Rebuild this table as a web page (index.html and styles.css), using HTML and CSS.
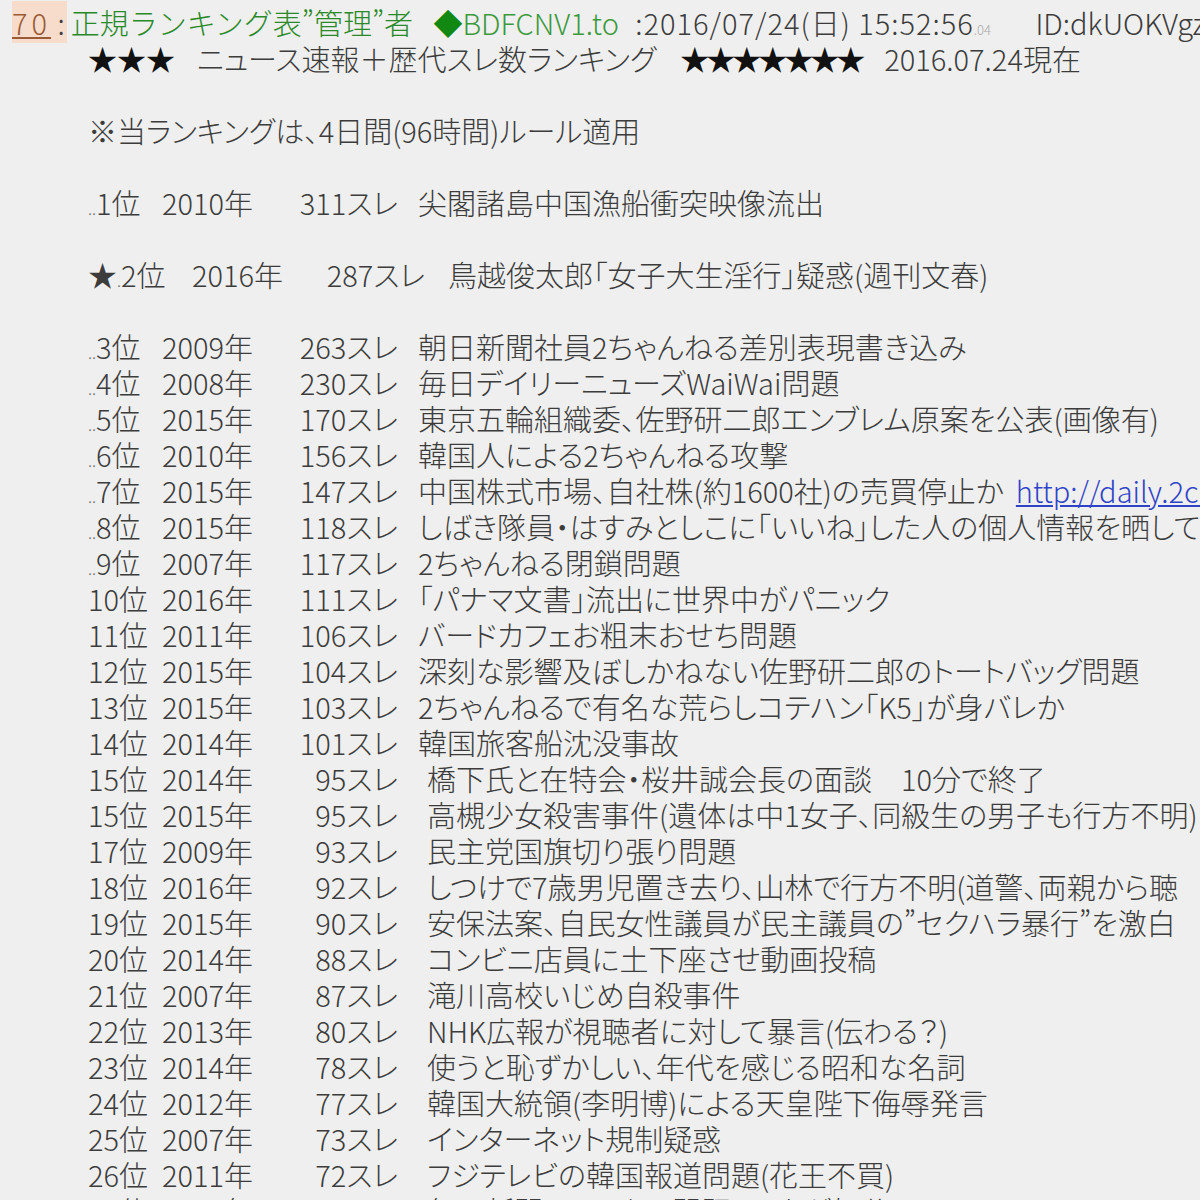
FILE: index.html
```html
<!DOCTYPE html>
<html lang="ja">
<head>
    <meta charset="UTF-8">
    <title>ニュース速報＋歴代スレ数ランキング</title>
    <link rel="stylesheet" href="styles.css">
</head>
<body>
    <div class="post">
        <div class="post-head">
            <span class="res-no"><a class="num">70</a> :</span><span class="name">正規ランキング表”管理”者</span>
            <span class="trip"><b>◆</b>BDFCNV1.to</span>
            <span class="date">:2016/07/24(日) 15:52:56<small>.04</small></span>
            <span class="uid">ID:dkUOKVgz0.net</span>
        </div>

        <div class="post-body">
            <div class="line banner">
                <span class="stars">★★★</span><span class="banner-title">ニュース速報＋歴代スレ数ランキング</span><span class="stars many">★★★★★★★</span><span class="banner-date">2016.07.24現在</span>
            </div>
            <div class="line"></div>
            <div class="line">※当ランキングは、4日間(96時間)ルール適用</div>
            <div class="line"></div>

            <div class="line row"><span class="rank"><i>..</i>1位</span><span class="year">2010年</span><span class="count">311スレ</span><span class="topic">尖閣諸島中国漁船衝突映像流出</span></div>
            <div class="line"></div>
            <div class="line row starred"><span class="rank">★<i>.</i>2位</span><span class="year">2016年</span><span class="count">287スレ</span><span class="topic">鳥越俊太郎「女子大生淫行」疑惑(週刊文春)</span></div>
            <div class="line"></div>

            <div class="line row"><span class="rank"><i>..</i>3位</span><span class="year">2009年</span><span class="count">263スレ</span><span class="topic">朝日新聞社員2ちゃんねる差別表現書き込み</span></div>
            <div class="line row"><span class="rank"><i>..</i>4位</span><span class="year">2008年</span><span class="count">230スレ</span><span class="topic">毎日デイリーニューズWaiWai問題</span></div>
            <div class="line row"><span class="rank"><i>..</i>5位</span><span class="year">2015年</span><span class="count">170スレ</span><span class="topic">東京五輪組織委、佐野研二郎エンブレム原案を公表(画像有)</span></div>
            <div class="line row"><span class="rank"><i>..</i>6位</span><span class="year">2010年</span><span class="count">156スレ</span><span class="topic">韓国人による2ちゃんねる攻撃</span></div>
            <div class="line row"><span class="rank"><i>..</i>7位</span><span class="year">2015年</span><span class="count">147スレ</span><span class="topic">中国株式市場、自社株(約1600社)の売買停止か<a class="url">http://daily.2ch.net/</a></span></div>
            <div class="line row"><span class="rank"><i>..</i>8位</span><span class="year">2015年</span><span class="count">118スレ</span><span class="topic">しばき隊員・はすみとしこに「いいね」した人の個人情報を晒して</span></div>
            <div class="line row"><span class="rank"><i>..</i>9位</span><span class="year">2007年</span><span class="count">117スレ</span><span class="topic">2ちゃんねる閉鎖問題</span></div>
            <div class="line row"><span class="rank">10位</span><span class="year">2016年</span><span class="count">111スレ</span><span class="topic">「パナマ文書」流出に世界中がパニック</span></div>
            <div class="line row"><span class="rank">11位</span><span class="year">2011年</span><span class="count">106スレ</span><span class="topic">バードカフェお粗末おせち問題</span></div>
            <div class="line row"><span class="rank">12位</span><span class="year">2015年</span><span class="count">104スレ</span><span class="topic">深刻な影響及ぼしかねない佐野研二郎のトートバッグ問題</span></div>
            <div class="line row"><span class="rank">13位</span><span class="year">2015年</span><span class="count">103スレ</span><span class="topic">2ちゃんねるで有名な荒らしコテハン「K5」が身バレか</span></div>
            <div class="line row"><span class="rank">14位</span><span class="year">2014年</span><span class="count">101スレ</span><span class="topic">韓国旅客船沈没事故</span></div>
            <div class="line row short"><span class="rank">15位</span><span class="year">2014年</span><span class="count">95スレ</span><span class="topic">橋下氏と在特会・桜井誠会長の面談　10分で終了</span></div>
            <div class="line row short"><span class="rank">15位</span><span class="year">2015年</span><span class="count">95スレ</span><span class="topic">高槻少女殺害事件(遺体は中1女子、同級生の男子も行方不明)</span></div>
            <div class="line row short"><span class="rank">17位</span><span class="year">2009年</span><span class="count">93スレ</span><span class="topic">民主党国旗切り張り問題</span></div>
            <div class="line row short"><span class="rank">18位</span><span class="year">2016年</span><span class="count">92スレ</span><span class="topic">しつけで7歳男児置き去り、山林で行方不明(道警、両親から聴</span></div>
            <div class="line row short"><span class="rank">19位</span><span class="year">2015年</span><span class="count">90スレ</span><span class="topic">安保法案、自民女性議員が民主議員の”セクハラ暴行”を激白</span></div>
            <div class="line row short"><span class="rank">20位</span><span class="year">2014年</span><span class="count">88スレ</span><span class="topic">コンビニ店員に土下座させ動画投稿</span></div>
            <div class="line row short"><span class="rank">21位</span><span class="year">2007年</span><span class="count">87スレ</span><span class="topic">滝川高校いじめ自殺事件</span></div>
            <div class="line row short"><span class="rank">22位</span><span class="year">2013年</span><span class="count">80スレ</span><span class="topic">NHK広報が視聴者に対して暴言(伝わる？)</span></div>
            <div class="line row short"><span class="rank">23位</span><span class="year">2014年</span><span class="count">78スレ</span><span class="topic">使うと恥ずかしい、年代を感じる昭和な名詞</span></div>
            <div class="line row short"><span class="rank">24位</span><span class="year">2012年</span><span class="count">77スレ</span><span class="topic">韓国大統領(李明博)による天皇陛下侮辱発言</span></div>
            <div class="line row short"><span class="rank">25位</span><span class="year">2007年</span><span class="count">73スレ</span><span class="topic">インターネット規制疑惑</span></div>
            <div class="line row short"><span class="rank">26位</span><span class="year">2011年</span><span class="count">72スレ</span><span class="topic">フジテレビの韓国報道問題(花王不買)</span></div>
            <div class="line row short"><span class="rank">27位</span><span class="year">2013年</span><span class="count">71スレ</span><span class="topic">毎日新聞ツイッター問題　3人が処分</span></div>
        </div>
    </div>
</body>
</html>
```

FILE: styles.css
```css
body {
    margin: 0;
    background-color: #efefef;
    color: #3c3c3c;
    font-family: "Noto Sans CJK JP", "Liberation Sans", sans-serif;
    font-size: 29px;
    font-weight: 300;
    line-height: 36px;
    font-feature-settings: "palt";
    overflow: hidden;
}

.post {
    padding: 4px 0 0 12px;
    white-space: nowrap;
}

/* header line of the post */
.post-head {
    height: 36px;
}

.res-no {
    background-color: #f7dccb;
    padding-right: 2px;
}

.num {
    color: #9a5a34;
    text-decoration: underline;
    letter-spacing: 4px;
}

.name {
    color: #2a8a2a;
    margin-left: 4px;
    font-feature-settings: normal;
}

.trip {
    color: #3c9a3c;
    margin-left: 14px;
}

.trip b {
    color: #118811;
    font-weight: normal;
}

.date {
    margin-left: 10px;
    letter-spacing: 1px;
}

.date small {
    font-size: 13px;
    color: #aaa;
    letter-spacing: 0;
}

.uid {
    margin-left: 38px;
}

/* body of the post */
.post-body {
    margin-left: 76px;
}

.line {
    height: 36px;
}

.stars {
    color: #111;
    font-weight: normal;
}

.stars.many {
    letter-spacing: -3px;
}

.banner-title {
    margin: 0 24px 0 22px;
}

.banner-date {
    margin-left: 22px;
}

.row {
    display: flex;
}

.row span {
    flex-shrink: 0;
}

.rank {
    width: 74px;
}

.rank i {
    font-style: normal;
    font-size: 16px;
    color: #777;
}

.year {
    width: 100px;
}

.count {
    width: 136px;
    text-align: right;
}

.topic {
    margin-left: 20px;
}

.starred .rank {
    width: 104px;
}

.starred .count {
    width: 133px;
}

.starred .topic {
    margin-left: 23px;
}

.short .topic {
    margin-left: 29px;
}

.url {
    color: #2f43c8;
    text-decoration: underline;
    margin-left: 12px;
}
```
